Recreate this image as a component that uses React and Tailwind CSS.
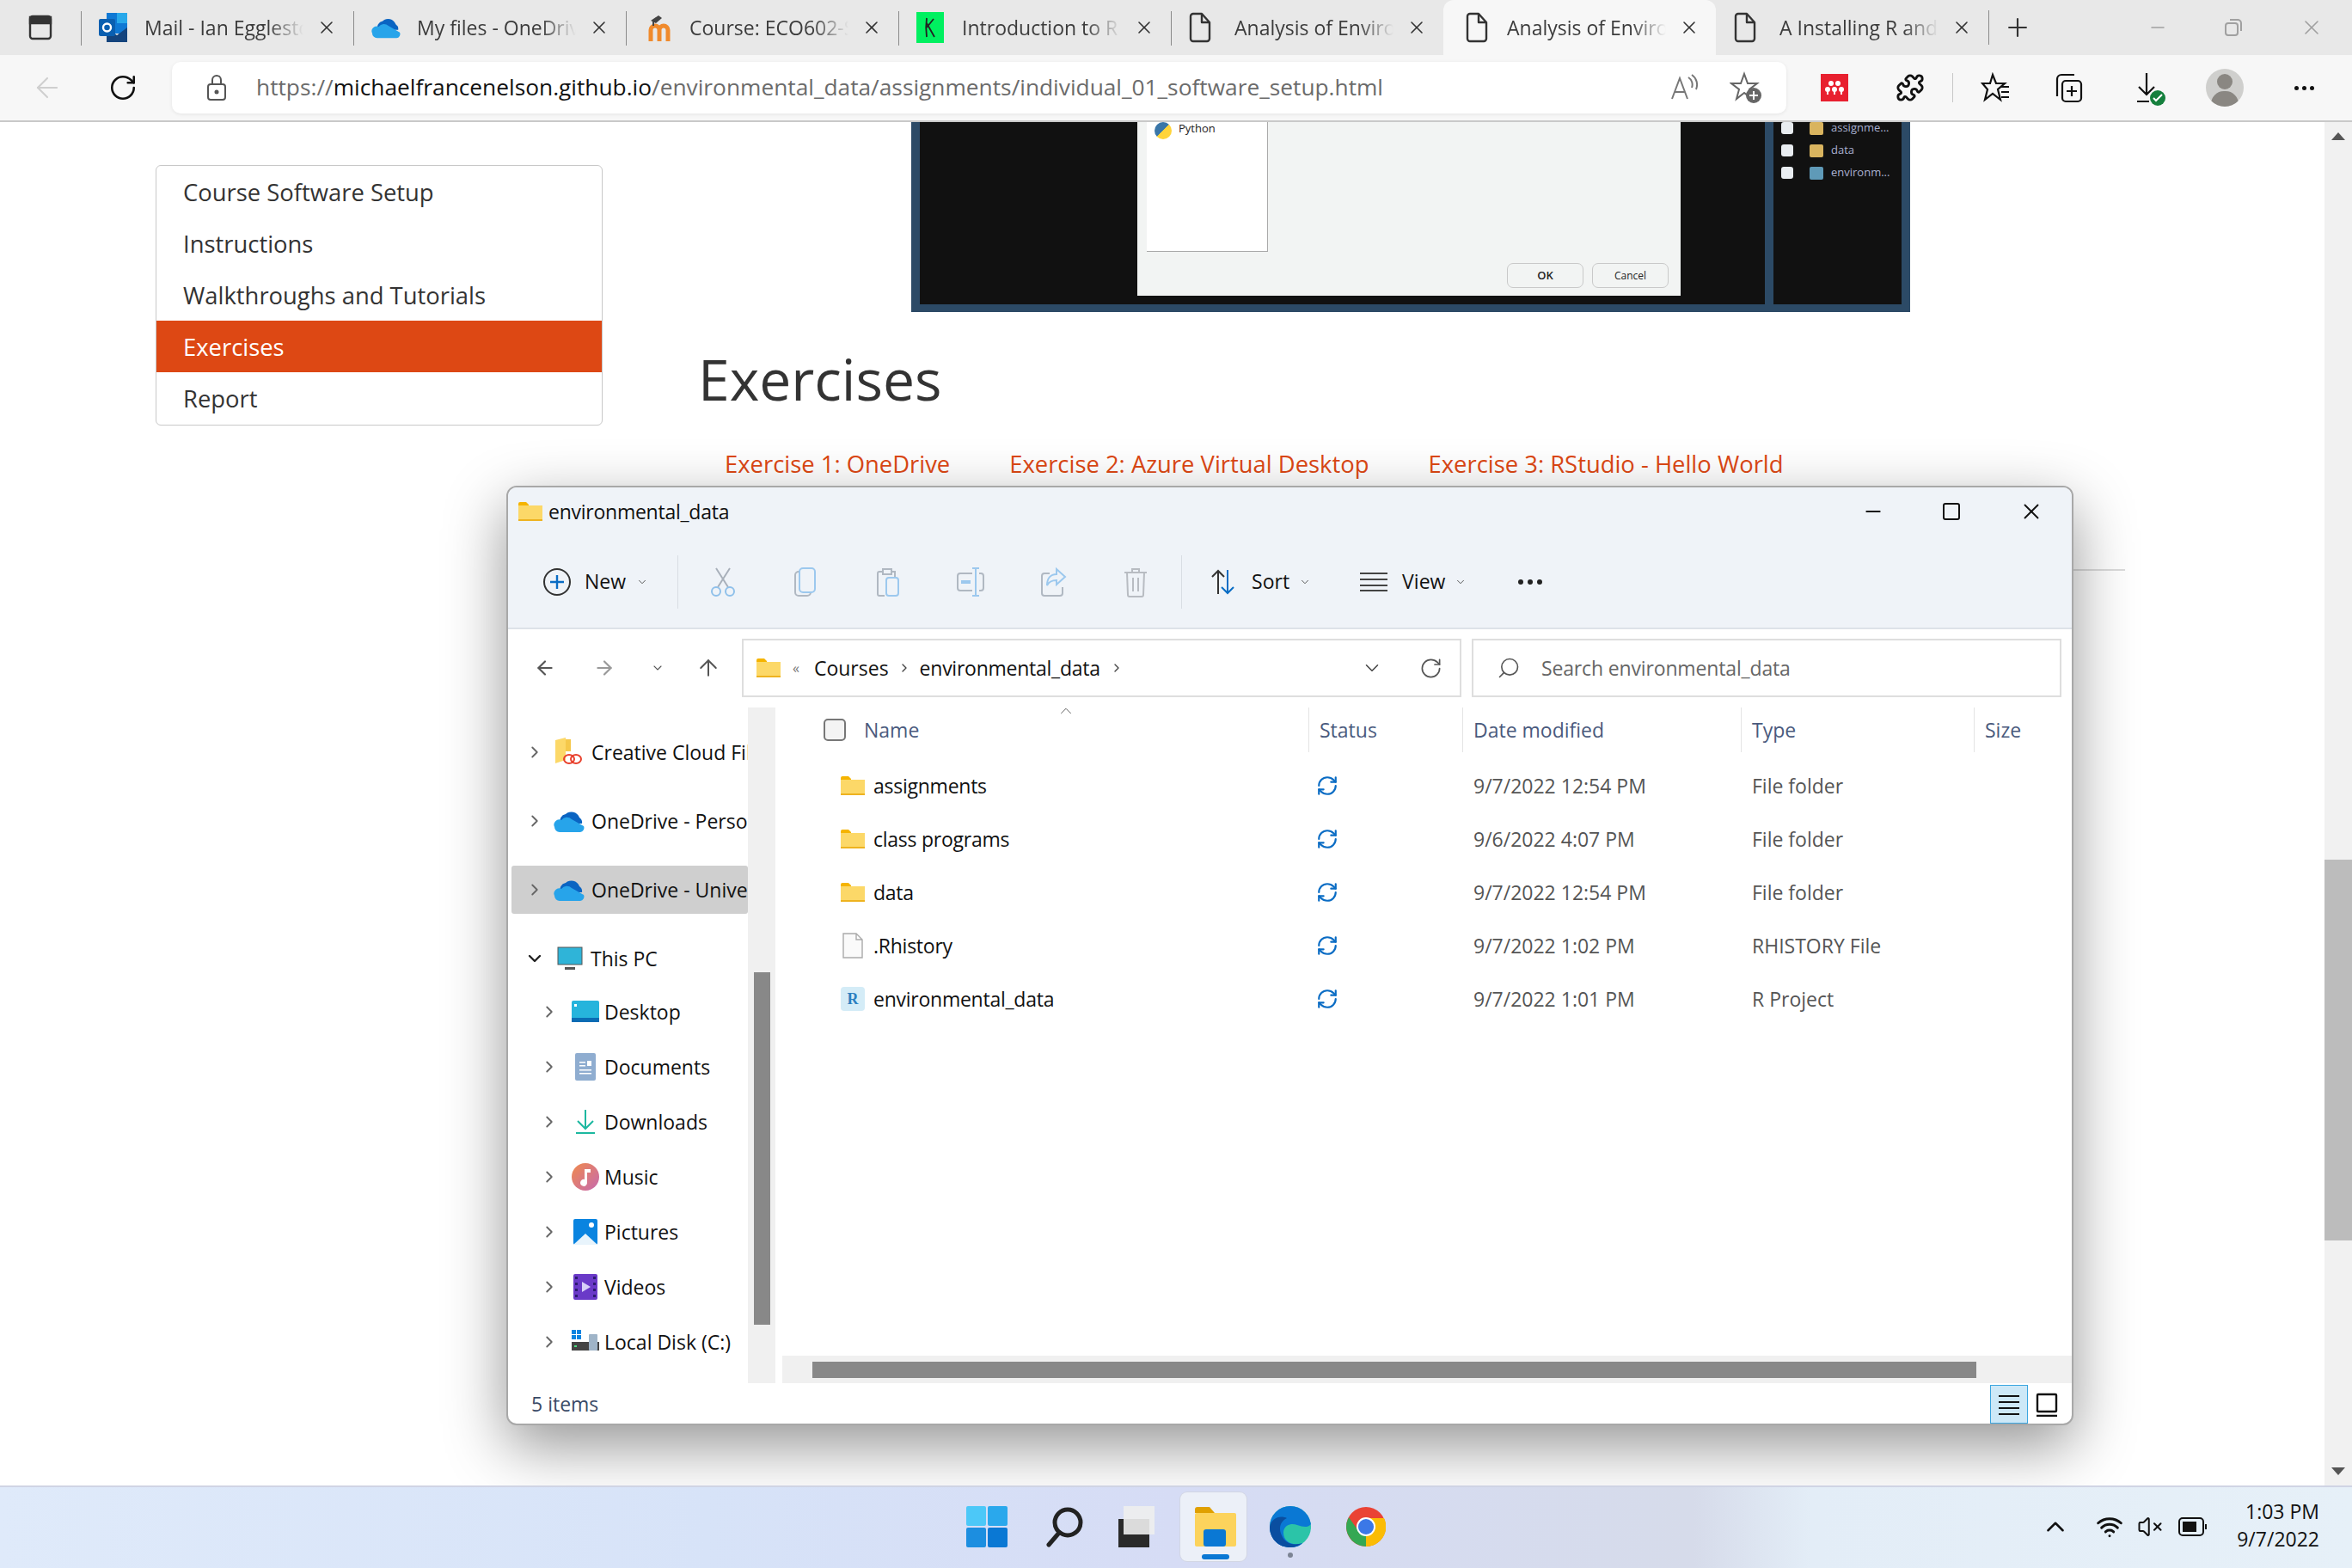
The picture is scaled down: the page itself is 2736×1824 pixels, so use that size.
import React from 'react';
import {
  ArrowLeft, ArrowRight, ArrowUp, RotateCw, Plus, Minus, X, ChevronDown, ChevronRight, ChevronUp,
  RefreshCw, Puzzle, Search, Wifi, VolumeX,
} from 'lucide-react';

const DocIcon = () => (
  <svg width="26" height="36" viewBox="0 0 26 36" fill="none" stroke="#333" strokeWidth="2.4" strokeLinejoin="round">
    <path d="M2 5a3 3 0 0 1 3-3h10l9 10v19a3 3 0 0 1-3 3H5a3 3 0 0 1-3-3z" />
    <path d="M15 2v10h9" />
  </svg>
);

const OutlookIcon = () => (
  <svg width="34" height="36" viewBox="0 0 34 36">
    <rect x="9" y="1" width="24" height="24" fill="#0f78d4" />
    <rect x="21" y="1" width="12" height="12" fill="#28a8ea" />
    <path d="M9 18l12 9 12-9v17H9z" fill="#14447d" />
    <rect x="0" y="8" width="19" height="20" rx="2" fill="#0a5fb0" />
    <circle cx="9.5" cy="18" r="4.5" fill="none" stroke="#fff" strokeWidth="2.4" />
  </svg>
);

const CloudIcon = ({ w = 36, h = 26 }) => (
  <svg width={w} height={h} viewBox="0 0 36 26">
    <path d="M8 16a8 8 0 0 1 6-11 10 10 0 0 1 16 4 7 7 0 0 1 3 7z" fill="#0a64c2" />
    <path d="M1 20a6 6 0 0 1 8-8 8 8 0 0 1 12-1l14 8a5 5 0 0 1-4 7H7a6 6 0 0 1-6-6z" fill="#27a4ea" />
  </svg>
);

const MoodleIcon = () => (
  <svg className="ml-[5px]" width="32" height="34" viewBox="0 0 32 34">
    <path d="M3 33V20a5 5 0 0 1 10 0v13M13 33V20a5 5 0 0 1 10 0v13" fill="none" stroke="#f08a2c" strokeWidth="5" />
    <path d="M3 9l9-6 4 3-7 6z" fill="#444" />
    <path d="M6 10v5" stroke="#444" strokeWidth="2" />
  </svg>
);

const RIcon = () => (
  <span className="flex h-[36px] w-[32px] items-center justify-center bg-[#00f060]">
    <svg width="18" height="26" viewBox="0 0 18 26" fill="none" stroke="#222" strokeWidth="1.8">
      <path d="M5 2c-1 7-1 15 0 22M5 13L13 3M5 8l9 16" />
    </svg>
  </span>
);

const FolderIcon = ({ w = 28, h = 22 }) => (
  <svg width={w} height={h} viewBox="0 0 28 22">
    <path d="M0 2a2 2 0 0 1 2-2h7l3 3v4H0z" fill="#f5b400" />
    <path d="M0 4h28v16a2 2 0 0 1-2 2H2a2 2 0 0 1-2-2z" fill="#fcd868" />
    <rect x="0" y="20" width="28" height="2" fill="#eeb320" />
  </svg>
);

const SyncIcon = () => <RefreshCw size={26} strokeWidth={2} className="text-[#0a6cc4]" />;

function Tab({ icon, label, active, sep = true }) {
  return (
    <div className={`relative flex h-[64px] w-[317px] shrink-0 items-center ${active ? 'rounded-t-[12px] bg-[#f7f7f7] pl-[26px]' : 'pl-[21px]'}`}>
      {sep && <span className="absolute left-0 top-[13px] h-[40px] w-px bg-[#8a8a8a]" />}
      <span className={`flex shrink-0 items-center ${active ? 'w-[48px]' : 'w-[53px]'}`}>{icon}</span>
      <span className="w-[185px] shrink-0 overflow-hidden whitespace-nowrap text-[23px] text-[#3c3c3c] [mask-image:linear-gradient(90deg,#000_78%,transparent)]">
        {label}
      </span>
      <X size={24} strokeWidth={1.6} className="ml-[15px] shrink-0 text-[#333]" />
    </div>
  );
}

function ChromeBar() {
  return (
    <div className="flex h-[64px] shrink-0 items-center bg-[#e8e8e8]">
      <div className="flex w-[94px] shrink-0 pl-[33px]">
        <svg width="28" height="30" viewBox="0 0 28 30" fill="none" stroke="#333" strokeWidth="2.4">
          <rect x="2" y="2" width="24" height="26" rx="3" />
          <path d="M2 3h24v7H2z" fill="#333" />
        </svg>
      </div>
      <Tab icon={<OutlookIcon />} label="Mail - Ian Eggleston" />
      <Tab icon={<CloudIcon w={34} h={30} />} label="My files - OneDrive" />
      <Tab icon={<MoodleIcon />} label="Course: ECO602-S" />
      <Tab icon={<RIcon />} label="Introduction to R" />
      <Tab icon={<DocIcon />} label="Analysis of Environ" />
      <Tab icon={<DocIcon />} label="Analysis of Environ" active sep={false} />
      <Tab icon={<DocIcon />} label="A Installing R and" sep={false} />
      <span className="h-[40px] w-px shrink-0 bg-[#8a8a8a]" />
      <Plus size={34} strokeWidth={1.5} className="ml-[16px] shrink-0 text-[#333]" />
      <div className="flex flex-1 items-center justify-end pr-[33px] text-[#a0a0a0]">
        <Minus size={24} strokeWidth={1.5} />
        <svg className="ml-[65px]" width="22" height="22" viewBox="0 0 22 22" fill="none" stroke="#a0a0a0" strokeWidth="2">
          <rect x="2" y="6" width="14" height="14" rx="3" />
          <path d="M7 2h9a4 4 0 0 1 4 4v9" />
        </svg>
        <X size={28} strokeWidth={1.4} className="ml-[66px]" />
      </div>
    </div>
  );
}

function AddressBar() {
  return (
    <div className="flex h-[78px] shrink-0 items-start border-b-2 border-[#c9c9c9] bg-[#f7f7f7] pt-[8px]">
      <div className="flex h-[60px] w-[200px] shrink-0 items-center pl-[36px]">
        <ArrowLeft size={38} strokeWidth={1.3} className="text-[#cfcfcf]" />
        <RotateCw size={34} strokeWidth={1.8} className="ml-[52px] text-[#111]" />
      </div>
      <div className="flex h-[60px] w-[1878px] shrink-0 items-center rounded-[10px] bg-white pl-[40px] shadow-[0_1px_4px_rgba(0,0,0,0.08)]">
        <svg width="24" height="32" viewBox="0 0 24 32" fill="none" stroke="#555" strokeWidth="2">
          <rect x="2" y="12" width="20" height="18" rx="3" />
          <path d="M7 12V7a5 5 0 0 1 10 0v5" />
          <circle cx="12" cy="21" r="1.5" fill="#555" />
        </svg>
        <span className="ml-[34px] whitespace-nowrap text-[26.3px] text-[#6b6b6b]">
          https://<span className="text-[#111]">michaelfrancenelson.github.io</span>/environmental_data/assignments/individual_01_software_setup.html
        </span>
        <div className="flex flex-1 items-center justify-end pr-[28px]">
          <svg width="34" height="34" viewBox="0 0 34 34" fill="none" stroke="#777" strokeWidth="2">
            <path d="M3 30L12 6l9 24M6 22h12M22 5a10 10 0 0 1 4 12M26 2a14 14 0 0 1 5 17" />
          </svg>
          <svg className="ml-[36px]" width="38" height="38" viewBox="0 0 38 38">
            <path d="M17 3l4 11h11l-9 7 3 11-9-7-9 7 3-11-9-7h11z" fill="none" stroke="#666" strokeWidth="2" />
            <circle cx="28" cy="28" r="9" fill="#666" />
            <path d="M28 23v10M23 28h10" stroke="#fff" strokeWidth="2" />
          </svg>
        </div>
      </div>
      <div className="flex h-[60px] flex-1 items-center">
        <span className="ml-[40px] flex h-[32px] w-[32px] shrink-0 items-center justify-center bg-[#e8202f]">
          <svg width="24" height="18" viewBox="0 0 24 18" fill="#fff">
            <circle cx="8" cy="4" r="3" />
            <circle cx="16" cy="4" r="3" />
            <circle cx="4" cy="11" r="3" />
            <circle cx="12" cy="11" r="3" />
            <circle cx="20" cy="11" r="3" />
            <path d="M3 11h2v6H3zM11 11h2v6h-2zM19 11h2v6h-2z" />
          </svg>
        </span>
        <Puzzle size={34} strokeWidth={2} className="ml-[55px] shrink-0 text-[#111]" />
        <span className="ml-[32px] h-[34px] w-px shrink-0 bg-[#c8c8c8]" />
        <svg className="ml-[32px] shrink-0" width="36" height="36" viewBox="0 0 36 36" fill="none" stroke="#111" strokeWidth="2.2">
          <path d="M14 3l4 10h10l-8 7 3 12-9-7-9 7 3-12-6-7h9zM24 17h9M24 23h9M24 29h9" />
        </svg>
        <svg className="ml-[49px] shrink-0" width="36" height="36" viewBox="0 0 36 36" fill="none" stroke="#111" strokeWidth="2.2">
          <rect x="10" y="10" width="22" height="24" rx="4" />
          <path d="M4 28V8a5 5 0 0 1 5-5h15M21 16v12M15 22h12" />
        </svg>
        <span className="relative ml-[56px] shrink-0">
          <svg width="36" height="38" viewBox="0 0 36 38" fill="none" stroke="#111" strokeWidth="2.2">
            <path d="M16 2v24M7 18l9 9 9-9M5 35h14" />
          </svg>
          <span className="absolute -bottom-[2px] -right-[2px] flex h-[18px] w-[18px] items-center justify-center rounded-full bg-[#15803d]">
            <svg width="12" height="10" viewBox="0 0 12 10" fill="none" stroke="#fff" strokeWidth="2">
              <path d="M1 5l3 3 7-7" />
            </svg>
          </span>
        </span>
        <span className="relative ml-[49px] h-[44px] w-[44px] shrink-0 overflow-hidden rounded-full bg-[#cfcfcd]">
          <span className="absolute left-[13px] top-[6px] h-[18px] w-[18px] rounded-full bg-[#8a8782]" />
          <span className="absolute left-[6px] top-[26px] h-[30px] w-[32px] rounded-full bg-[#8a8782]" />
        </span>
        <span className="ml-[59px] flex shrink-0 gap-[4px]">
          <i className="h-[5px] w-[5px] rounded-full bg-[#111]" />
          <i className="h-[5px] w-[5px] rounded-full bg-[#111]" />
          <i className="h-[5px] w-[5px] rounded-full bg-[#111]" />
        </span>
      </div>
    </div>
  );
}

const NAV_ITEMS = ['Course Software Setup', 'Instructions', 'Walkthroughs and Tutorials', 'Exercises', 'Report'];

function PageNav() {
  return (
    <div className="ml-[181px] mt-[50px] w-[520px] self-start overflow-hidden rounded-[6px] border border-[#c8c8c8] bg-white">
      {NAV_ITEMS.map((item) => (
        <div
          key={item}
          className={`flex h-[60px] items-center px-[31px] pt-[1px] text-[27.4px] ${item === 'Exercises' ? 'bg-[#dd4814] text-white' : 'text-[#333]'}`}
        >
          {item}
        </div>
      ))}
      <div className="h-px" />
    </div>
  );
}

function PageScreenshot() {
  return (
    <div className="ml-[359px] flex h-[221px] w-[1162px] bg-[#2c4a66] pl-[10px] pr-[10px] pb-[9px]">
      <div className="flex w-[983px] bg-[#111] pl-[253px]">
        <div className="h-[202px] w-[632px] bg-[#f2f4f3]">
          <div className="ml-[11px] flex h-[151px] w-[141px] items-start gap-[8px] border-b border-r border-[#aaa] bg-white pl-[9px]">
            <span className="h-[20px] w-[20px] rounded-full bg-[linear-gradient(135deg,#3a76a8_50%,#ffd43b_50%)]" />
            <span className="-mt-[2px] text-[13px] text-[#222]">Python</span>
          </div>
          <div className="mt-[13px] flex justify-end gap-[10px] pr-[14px]">
            <span className="flex h-[29px] w-[89px] items-center justify-center rounded-[7px] border border-[#c9c9c9] text-[13px] font-semibold text-[#222]">OK</span>
            <span className="flex h-[29px] w-[89px] items-center justify-center rounded-[7px] border border-[#c9c9c9] text-[12px] text-[#222]">Cancel</span>
          </div>
        </div>
      </div>
      <div className="ml-[10px] flex flex-1 flex-col gap-[8px] bg-[#111] pl-[9px] text-[13px] text-[#a9b0d0]">
        {['assignme...', 'data', 'environm...'].map((t) => (
          <div key={t} className="flex h-[18px] items-center first:-mt-[2px]">
            <span className="h-[14px] w-[14px] rounded-[3px] bg-[#e8ecf0]" />
            <span className={`ml-[19px] h-[15px] w-[16px] rounded-[2px] ${t === 'environm...' ? 'bg-[#5f9ab8]' : 'bg-[#d9b45f]'}`} />
            <span className="ml-[9px] whitespace-nowrap">{t}</span>
          </div>
        ))}
      </div>
    </div>
  );
}

function PageArticle() {
  return (
    <div className="flex-1">
      <PageScreenshot />
      <h2 className="ml-[111px] mt-[32px] text-[66px] leading-[90px] text-[#333]">Exercises</h2>
      <div className="ml-[142px] mt-[36px] flex gap-[69px] text-[27.4px] leading-[38px] text-[#dd4814]">
        <span>Exercise 1: OneDrive</span>
        <span>Exercise 2: Azure Virtual Desktop</span>
        <span>Exercise 3: RStudio - Hello World</span>
      </div>
      <div className="ml-[100px] mr-[232px] mt-[103px] h-[2px] bg-[#dcdcdc]" />
    </div>
  );
}

function Scrollbar() {
  return (
    <div className="flex w-[32px] shrink-0 flex-col items-center bg-[#f1f1f1]">
      <span className="mt-[12px] h-0 w-0 border-x-[8px] border-b-[9px] border-x-transparent border-b-[#555]" />
      <span className="mt-[837px] h-[443px] w-full bg-[#bcbcbc]" />
      <span className="mt-auto mb-[12px] h-0 w-0 border-x-[8px] border-t-[9px] border-x-transparent border-t-[#555]" />
    </div>
  );
}

function RibbonBtn({ children }) {
  return <span className="flex w-[96px] shrink-0 justify-center">{children}</span>;
}

const Chev = () => <ChevronDown size={14} strokeWidth={1.5} className="text-[#444]" />;

function Ribbon() {
  return (
    <div className="h-[165px] shrink-0 border-b-2 border-[#dde2e8] bg-[#eff3f8]">
      <div className="flex h-[56px] items-center pl-[12px]">
        <FolderIcon />
        <span className="ml-[7px] text-[23px] tracking-[-0.25px] text-[#111]">environmental_data</span>
        <div className="ml-auto flex items-center pr-[32px]">
          <Minus size={26} strokeWidth={2} className="text-[#111]" />
          <span className="ml-[68px] h-[20px] w-[20px] rounded-[3px] border-[2.5px] border-[#111]" />
          <X size={30} strokeWidth={1.5} className="ml-[68px] text-[#111]" />
        </div>
      </div>
      <div className="flex h-[107px] items-center">
        <svg className="ml-[40px] shrink-0" width="34" height="34" viewBox="0 0 34 34" fill="none">
          <circle cx="17" cy="17" r="15" stroke="#333" strokeWidth="2" />
          <path d="M17 9v16M9 17h16" stroke="#0a6cc4" strokeWidth="2.4" />
        </svg>
        <span className="ml-[15px] text-[23px] text-[#111]">New</span>
        <span className="ml-[12px]"><Chev /></span>
        <span className="ml-[34px] h-[62px] w-px shrink-0 bg-[#d8dde3]" />
        <span className="ml-[4px]" />
        <RibbonBtn>
          <svg width="30" height="36" viewBox="0 0 30 36" fill="none" strokeWidth="2">
            <path d="M7 2l14 22M23 2L9 24" stroke="#a8b0ba" />
            <circle cx="7" cy="29" r="5" stroke="#8fc0ea" />
            <circle cx="23" cy="29" r="5" stroke="#8fc0ea" />
          </svg>
        </RibbonBtn>
        <RibbonBtn>
          <svg width="30" height="36" viewBox="0 0 30 36" fill="none" strokeWidth="2">
            <rect x="3" y="6" width="18" height="28" rx="4" stroke="#b0b8c2" />
            <rect x="8" y="2" width="18" height="28" rx="4" stroke="#9cc8ee" fill="#eff3f8" />
          </svg>
        </RibbonBtn>
        <RibbonBtn>
          <svg width="30" height="36" viewBox="0 0 30 36" fill="none" strokeWidth="2">
            <path d="M8 6H5a2 2 0 0 0-2 2v24a2 2 0 0 0 2 2h6M20 6h3v6M9 3h10v6H9z" stroke="#b0b8c2" />
            <rect x="13" y="13" width="14" height="21" rx="3" stroke="#9cc8ee" />
          </svg>
        </RibbonBtn>
        <RibbonBtn>
          <svg width="34" height="36" viewBox="0 0 34 36" fill="none" strokeWidth="2">
            <path d="M19 8H5a3 3 0 0 0-3 3v14a3 3 0 0 0 3 3h14M27 8h2a3 3 0 0 1 3 3v14a3 3 0 0 1-3 3h-2" stroke="#b0b8c2" />
            <path d="M23 2v32M19 2h8M19 34h8" stroke="#9cc8ee" />
            <path d="M6 18h11" stroke="#9cc8ee" strokeWidth="4" />
          </svg>
        </RibbonBtn>
        <RibbonBtn>
          <svg width="32" height="36" viewBox="0 0 32 36" fill="none" strokeWidth="2">
            <path d="M12 8H6a3 3 0 0 0-3 3v20a3 3 0 0 0 3 3h18a3 3 0 0 0 3-3v-7" stroke="#b0b8c2" />
            <path d="M20 3l10 9-10 9v-5c-6 0-9 2-11 6 0-8 4-13 11-13z" stroke="#9cc8ee" />
          </svg>
        </RibbonBtn>
        <RibbonBtn>
          <svg width="28" height="36" viewBox="0 0 28 36" fill="none" stroke="#b8bcc2" strokeWidth="2">
            <path d="M1 7h26M10 7V3h8v4M4 7l1 26a2 2 0 0 0 2 2h14a2 2 0 0 0 2-2l1-26M11 13v16M17 13v16" />
          </svg>
        </RibbonBtn>
        <span className="ml-[5px] h-[62px] w-px shrink-0 bg-[#d8dde3]" />
        <svg className="ml-[32px] shrink-0" width="32" height="32" viewBox="0 0 32 32" fill="none" strokeWidth="2">
          <path d="M10 30V3M3 10l7-7 7 7" stroke="#333" />
          <path d="M21 2v27M14 22l7 7 7-7" stroke="#0a6cc4" />
        </svg>
        <span className="ml-[17px] text-[23px] text-[#111]">Sort</span>
        <span className="ml-[11px]"><Chev /></span>
        <svg className="ml-[57px] shrink-0" width="32" height="24" viewBox="0 0 32 24" fill="none" stroke="#444" strokeWidth="2">
          <path d="M0 2h32M0 9h32M0 16h32M0 22h32" />
        </svg>
        <span className="ml-[17px] text-[23px] text-[#111]">View</span>
        <span className="ml-[11px]"><Chev /></span>
        <span className="ml-[60px] flex gap-[5px]">
          <i className="h-[6px] w-[6px] rounded-full bg-[#222]" />
          <i className="h-[6px] w-[6px] rounded-full bg-[#222]" />
          <i className="h-[6px] w-[6px] rounded-full bg-[#222]" />
        </span>
      </div>
    </div>
  );
}

function PathRow() {
  return (
    <div className="flex h-[91px] shrink-0 items-start bg-white pt-[11px]">
      <div className="flex h-[68px] w-[272px] shrink-0 items-center text-[#555]">
        <ArrowLeft size={26} strokeWidth={2} className="ml-[30px]" />
        <ArrowRight size={26} strokeWidth={2} className="ml-[43px] text-[#999]" />
        <ChevronDown size={16} strokeWidth={1.6} className="ml-[41px]" />
        <ArrowUp size={30} strokeWidth={1.6} className="ml-[36px]" />
      </div>
      <div className="flex h-[68px] w-[837px] shrink-0 items-center border-2 border-[#dedede] pl-[15px] text-[23px] text-[#111]">
        <FolderIcon />
        <span className="ml-[14px] text-[16px] leading-none text-[#777]">«</span>
        <span className="ml-[17px]">Courses</span>
        <ChevronRight size={16} strokeWidth={2} className="mx-[10px] text-[#444]" />
        <span className="tracking-[-0.25px]">environmental_data</span>
        <ChevronRight size={16} strokeWidth={2} className="ml-[11px] text-[#444]" />
        <ChevronDown size={26} strokeWidth={1.4} className="ml-auto text-[#444]" />
        <RotateCw size={27} strokeWidth={1.5} className="ml-[42px] mr-[20px] text-[#555]" />
      </div>
      <div className="ml-[12px] flex h-[68px] w-[686px] shrink-0 items-center border-2 border-[#dedede] pl-[27px] text-[23px] text-[#666]">
        <Search size={28} strokeWidth={1.4} className="-scale-x-100 text-[#555]" />
        <span className="ml-[24px] tracking-[-0.15px]">Search environmental_data</span>
      </div>
    </div>
  );
}

const TREE_TOP = [
  { label: 'Creative Cloud Files', icon: (
    <svg width="36" height="34" viewBox="0 0 36 34" fill="none">
      <path d="M2 3l12-3v26L2 30z" fill="#fcd868" />
      <path d="M14 2h6v14h-6z" fill="#f5c84a" />
      <ellipse cx="18" cy="25" rx="6" ry="5" stroke="#e8402c" strokeWidth="2" />
      <ellipse cx="26" cy="25" rx="6" ry="5" stroke="#e8402c" strokeWidth="2" />
    </svg>
  ) },
  { label: 'OneDrive - Personal', icon: <CloudIcon /> },
  { label: 'OneDrive - University', icon: <CloudIcon />, selected: true },
];

const TREE_CHILDREN = [
  { label: 'Desktop', icon: (
    <svg width="32" height="30" viewBox="0 0 32 30">
      <rect y="2" width="32" height="24" rx="2" fill="#26b4dc" />
      <rect y="22" width="32" height="5" fill="#0a6cb4" />
      <rect x="3" y="6" width="3" height="3" fill="#fff" />
    </svg>
  ) },
  { label: 'Documents', icon: (
    <svg width="24" height="32" viewBox="0 0 24 32">
      <rect width="24" height="32" rx="2" fill="#8fadd0" />
      <path d="M5 10h7v1.5H5zM5 14h7v1.5H5zM5 19h14v1.5H5zM5 23h14v1.5H5z" fill="#fff" />
      <rect x="14" y="9" width="5" height="6" fill="#fff" />
    </svg>
  ) },
  { label: 'Downloads', icon: (
    <svg width="24" height="30" viewBox="0 0 24 30" fill="none" stroke="#1cb8a0" strokeWidth="2">
      <path d="M12 1v22M3 14l9 9 9-9M1 28h22" />
    </svg>
  ) },
  { label: 'Music', icon: (
    <svg width="32" height="32" viewBox="0 0 32 32">
      <defs>
        <linearGradient id="musicFill" x1="0" y1="0" x2="1" y2="1">
          <stop offset="0" stopColor="#f08a4c" />
          <stop offset="1" stopColor="#c66ab0" />
        </linearGradient>
      </defs>
      <circle cx="16" cy="16" r="16" fill="url(#musicFill)" />
      <path d="M15 7h7v4h-4v12a4 4 0 1 1-3-4z" fill="#fff" />
    </svg>
  ) },
  { label: 'Pictures', icon: (
    <svg width="28" height="30" viewBox="0 0 28 30">
      <rect width="28" height="30" rx="2" fill="#0a84e0" />
      <path d="M0 30l14-13 14 13z" fill="#e8f4fc" />
      <circle cx="21" cy="7" r="3" fill="#fff" />
    </svg>
  ) },
  { label: 'Videos', icon: (
    <svg width="28" height="30" viewBox="0 0 28 30">
      <rect width="28" height="30" rx="2" fill="#6a3ac8" />
      <path d="M2 3h3v3H2zM2 10h3v3H2zM2 17h3v3H2zM2 24h3v3H2zM23 3h3v3h-3zM23 10h3v3h-3zM23 17h3v3h-3zM23 24h3v3h-3z" fill="#2c1a70" />
      <path d="M10 9l10 6-10 6z" fill="#d8d0f8" />
    </svg>
  ) },
  { label: 'Local Disk (C:)', icon: (
    <svg width="32" height="30" viewBox="0 0 32 30">
      <rect x="0" y="1" width="5" height="5" fill="#0a84e0" />
      <rect x="6" y="1" width="5" height="5" fill="#0a84e0" />
      <rect x="0" y="7" width="5" height="5" fill="#0a84e0" />
      <rect x="6" y="7" width="5" height="5" fill="#0a84e0" />
      <rect x="0" y="15" width="32" height="10" fill="#444" />
      <rect x="20" y="6" width="10" height="19" rx="1" fill="#9fb4c8" />
      <rect x="3" y="19" width="3" height="2" fill="#4ade80" />
    </svg>
  ) },
];

function NavTree() {
  return (
    <div className="flex w-[279px] shrink-0 flex-col overflow-hidden text-[23px] text-[#111]">
      <div className="flex flex-col gap-[24px] pt-[24px]">
        {TREE_TOP.map((row) => (
          <div key={row.label} className={`ml-[4px] flex h-[56px] items-center whitespace-nowrap rounded-[3px] ${row.selected ? 'bg-[#cfcfcf]' : ''}`}>
            <ChevronRight size={22} strokeWidth={2} className="ml-[16px] shrink-0 text-[#666]" />
            <span className="ml-[7px] flex w-[44px] shrink-0 justify-center">{row.icon}</span>
            <span className="ml-[4px]">{row.label}</span>
          </div>
        ))}
      </div>
      <div className="ml-[4px] mt-[24px] flex h-[56px] items-center">
        <ChevronDown size={24} strokeWidth={2.4} className="ml-[15px] shrink-0 text-[#222]" />
        <svg className="ml-[7px] shrink-0" width="44" height="32" viewBox="0 0 32 32">
          <rect x="2" y="3" width="28" height="20" fill="#2fb4d8" stroke="#555" />
          <rect x="10" y="26" width="12" height="3" fill="#555" />
        </svg>
        <span className="ml-[2px]">This PC</span>
      </div>
      <div className="mt-[2px]">
        {TREE_CHILDREN.map((row) => (
          <div key={row.label} className="flex h-[64px] items-center whitespace-nowrap">
            <ChevronRight size={22} strokeWidth={2} className="ml-[37px] shrink-0 text-[#666]" />
            <span className="ml-[13px] flex w-[36px] shrink-0 justify-center">{row.icon}</span>
            <span className="ml-[4px]">{row.label}</span>
          </div>
        ))}
      </div>
    </div>
  );
}

const FILES = [
  { name: 'assignments', date: '9/7/2022 12:54 PM', type: 'File folder', icon: <FolderIcon /> },
  { name: 'class programs', date: '9/6/2022 4:07 PM', type: 'File folder', icon: <FolderIcon /> },
  { name: 'data', date: '9/7/2022 12:54 PM', type: 'File folder', icon: <FolderIcon /> },
  { name: '.Rhistory', date: '9/7/2022 1:02 PM', type: 'RHISTORY File', icon: (
    <svg width="24" height="30" viewBox="0 0 24 30" fill="#fafafa" stroke="#aaa" strokeWidth="1.4">
      <path d="M1 1h15l7 7v21H1zM16 1v7h7" />
    </svg>
  ) },
  { name: 'environmental_data', date: '9/7/2022 1:01 PM', type: 'R Project', icon: (
    <span className="flex h-[28px] w-[28px] items-center justify-center rounded-[4px] bg-[#d4ecf7] font-['Liberation_Serif'] text-[18px] font-bold leading-none text-[#2a7fc0]">R</span>
  ) },
];

const COLS = 'grid grid-cols-[612px_179px_324px_271px_115px]';

function FileList() {
  return (
    <div className="flex min-w-0 flex-1 flex-col text-[23px]">
      <div className="flex-1">
        <div className={`${COLS} h-[52px] items-center text-[#4a5a7d]`}>
          <div className="relative flex h-full items-center pl-[48px]">
            <span className="h-[26px] w-[26px] rounded-[5px] border-2 border-[#777] bg-[#f4f4f4]" />
            <span className="ml-[21px]">Name</span>
            <ChevronUp size={22} strokeWidth={1} className="absolute left-[319px] top-[-7px] text-[#555]" />
          </div>
          {['Status', 'Date modified', 'Type', 'Size'].map((h) => (
            <div key={h} className="flex h-full items-center border-l border-[#e4e4e4] pl-[12px]">{h}</div>
          ))}
        </div>
        <div className="pt-[8px]">
          {FILES.map((f) => (
            <div key={f.name} className={`${COLS} h-[62px] items-center text-[#555]`}>
              <div className="flex items-center pl-[68px] text-[#111]">
                <span className="flex w-[28px] shrink-0 justify-center">{f.icon}</span>
                <span className="ml-[10px] tracking-[-0.25px]">{f.name}</span>
              </div>
              <div className="pl-[9px]"><SyncIcon /></div>
              <div className="pl-[13px]">{f.date}</div>
              <div className="pl-[13px]">{f.type}</div>
              <div />
            </div>
          ))}
        </div>
      </div>
      <div className="flex h-[32px] shrink-0 items-center bg-[#f0f0f0] pl-[35px]">
        <span className="h-[19px] w-[1354px] bg-[#888]" />
      </div>
    </div>
  );
}

function ExplorerWindow() {
  return (
    <div className="absolute left-[589px] top-[423px] flex h-[1093px] w-[1823px] flex-col overflow-hidden rounded-[12px] border-2 border-[#a8a8a8] bg-white shadow-[0_24px_70px_rgba(0,0,0,0.42)]">
      <Ribbon />
      <PathRow />
      <div className="flex min-h-0 flex-1">
        <NavTree />
        <div className="flex w-[32px] shrink-0 justify-center bg-[#f0f0f0]">
          <span className="mt-[308px] h-[410px] w-[19px] bg-[#888]" />
        </div>
        <div className="w-[8px] shrink-0" />
        <FileList />
      </div>
      <div className="flex h-[47px] shrink-0 items-center pl-[27px] pt-[2px] text-[23px] text-[#3a4a66]">
        <span>5 items</span>
        <div className="ml-auto flex h-full items-center pr-[16px]">
          <span className="flex h-full w-[44px] items-center justify-center border border-[#3ba6e0] bg-[#cde8f7]">
            <svg width="26" height="26" viewBox="0 0 26 26" fill="none" stroke="#111" strokeWidth="2">
              <path d="M1 3h24M1 10h24M1 17h24M1 24h24" />
            </svg>
          </span>
          <svg className="ml-[9px]" width="26" height="28" viewBox="0 0 26 28" fill="none" stroke="#111" strokeWidth="2.4">
            <rect x="2" y="2" width="22" height="20" rx="1" />
            <path d="M1 27h24" />
          </svg>
        </div>
      </div>
    </div>
  );
}

function Taskbar() {
  return (
    <div className="relative flex h-[96px] shrink-0 items-center border-t-2 border-[#d0d4e4] bg-[linear-gradient(90deg,#dfeafa_0%,#d7e3f8_30%,#d6dcf5_50%,#d6dbea_72%,#e3edf7_77%,#e6f0f8_100%)] pb-[3px]">
      <svg className="ml-[1124px] shrink-0" width="48" height="48" viewBox="0 0 48 48">
        <rect x="0" y="0" width="23" height="23" rx="2" fill="#4cc8f8" />
        <rect x="25" y="0" width="23" height="23" rx="2" fill="#2aa8ec" />
        <rect x="0" y="25" width="23" height="23" rx="2" fill="#1c8ee0" />
        <rect x="25" y="25" width="23" height="23" rx="2" fill="#0a78d4" />
      </svg>
      <svg className="ml-[44px] shrink-0" width="44" height="48" viewBox="0 0 44 48" fill="none" stroke="#222" strokeWidth="5">
        <circle cx="26" cy="19" r="15" />
        <path d="M16 31L4 45" strokeLinecap="round" />
      </svg>
      <span className="relative ml-[41px] h-[48px] w-[42px] shrink-0">
        <span className="absolute bottom-0 left-0 h-[33px] w-[36px] bg-[#2a2a2a]" />
        <span className="absolute right-0 top-0 h-[33px] w-[36px] bg-[#eeeeee]/90" />
      </span>
      <span className="relative ml-[30px] flex h-[80px] w-[77px] shrink-0 justify-center rounded-[8px] bg-[#ecf0f8] pl-[4px] pt-[17px] shadow-[0_0_0_1px_#d2d6e4]">
        <svg width="48" height="46" viewBox="0 0 48 46">
          <path d="M0 3a3 3 0 0 1 3-3h14l6 7H0z" fill="#e0a000" />
          <rect x="0" y="7" width="48" height="39" rx="2" fill="#fcd35c" />
          <rect x="10" y="26" width="26" height="20" rx="3" fill="#0a78d4" />
        </svg>
        <span className="absolute bottom-[2px] h-[6px] w-[32px] rounded-[3px] bg-[#0a78d4]" />
      </span>
      <span className="relative ml-[27px] h-[48px] w-[48px] shrink-0">
        <svg width="48" height="48" viewBox="0 0 48 48">
          <circle cx="24" cy="24" r="24" fill="#2bc4a8" />
          <path d="M48 24A24 24 0 0 0 0 24c0 14 10 24 24 24 6 0 12-2 14-5-12 4-22-2-22-12 0-8 8-12 16-9 8 3 16 3 16-3z" fill="#0a78d4" />
          <path d="M24 48C10 48 0 38 0 24c2-10 12-14 20-10-8 4-10 12-6 20 3 8 12 13 24 9-4 3-9 5-14 5z" fill="#0a4ea0" />
        </svg>
        <span className="absolute -bottom-[12px] left-[21px] h-[6px] w-[6px] rounded-full bg-[#7c8494]" />
      </span>
      <svg className="ml-[41px] shrink-0" width="46" height="46" viewBox="0 0 46 46">
        <circle cx="23" cy="23" r="23" fill="#ea4335" />
        <path d="M23 23L3 34A23 23 0 0 0 23 46z" fill="#34a853" />
        <path d="M23 23V46A23 23 0 0 0 44 13H23z" fill="#fbbc05" />
        <path d="M3 34A23 23 0 0 1 3 12l12 17z" fill="#34a853" />
        <circle cx="23" cy="23" r="11" fill="#fff" />
        <circle cx="23" cy="23" r="9" fill="#3b78e7" />
      </svg>
      <ChevronUp size={34} strokeWidth={1.8} className="ml-[762px] shrink-0 text-[#111]" />
      <Wifi size={32} strokeWidth={2.2} className="ml-[30px] shrink-0 text-[#111]" />
      <VolumeX size={30} strokeWidth={1.6} className="ml-[16px] shrink-0 text-[#111]" />
      <svg className="ml-[18px] shrink-0" width="34" height="22" viewBox="0 0 34 22" fill="none" stroke="#111" strokeWidth="2">
        <rect x="1" y="1" width="28" height="20" rx="4" />
        <rect x="5" y="5" width="16" height="12" fill="#111" stroke="none" />
        <path d="M32 8v6" />
      </svg>
      <div className="ml-auto -mt-[3px] pr-[38px] text-right text-[23px] leading-[32px] text-[#111]">
        <div>1:03 PM</div>
        <div>9/7/2022</div>
      </div>
    </div>
  );
}

export default function App() {
  return (
    <div className="flex h-[1824px] w-[2736px] flex-col overflow-hidden bg-white font-['Open_Sans',sans-serif]">
      <ChromeBar />
      <AddressBar />
      <div className="relative flex min-h-0 flex-1">
        <PageNav />
        <PageArticle />
        <Scrollbar />
        <ExplorerWindow />
      </div>
      <Taskbar />
    </div>
  );
}
